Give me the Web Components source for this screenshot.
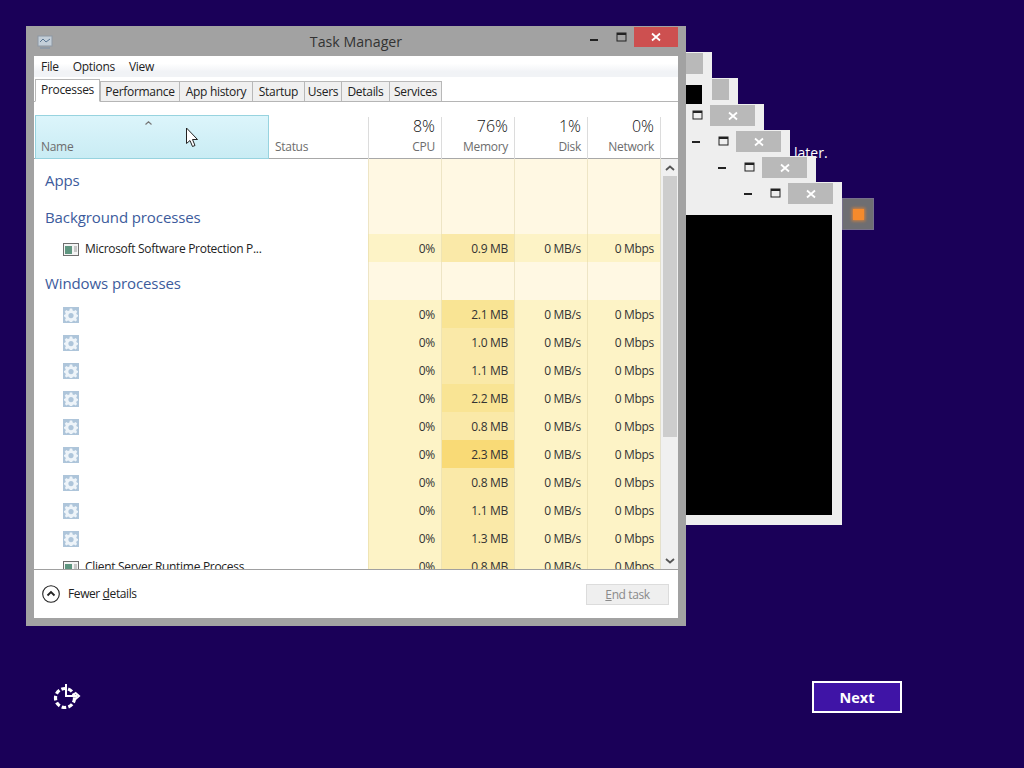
<!DOCTYPE html>
<html>
<head>
<meta charset="utf-8">
<title>Task Manager</title>
<style>
  html, body { margin: 0; height: 100%; background: #1a0058; overflow: hidden; }
  body { font-family: "Open Sans", "Liberation Sans", sans-serif; }
</style>
</head>
<body>
<setup-screen>
  <span slot="text">later.</span>
  <back-window x="312" y="52" style="z-index:2"></back-window>
  <back-window x="338" y="78" style="z-index:1"></back-window>
  <back-window x="364" y="104" style="z-index:3"></back-window>
  <back-window x="390" y="130" style="z-index:4"></back-window>
  <back-window x="416" y="156" style="z-index:5"></back-window>
  <back-window x="442" y="182" style="z-index:6"></back-window>
  <task-manager>
    <group-row h="39" pad="11">Apps</group-row>
    <group-row h="36" pad="9">Background processes</group-row>
    <proc-row icon="exe" mem="0.9 MB" heat="1">Microsoft Software Protection P...</proc-row>
    <group-row h="38" pad="11">Windows processes</group-row>
    <proc-row icon="gear" mem="2.1 MB" heat="2"></proc-row>
    <proc-row icon="gear" mem="1.0 MB" heat="1"></proc-row>
    <proc-row icon="gear" mem="1.1 MB" heat="1"></proc-row>
    <proc-row icon="gear" mem="2.2 MB" heat="2"></proc-row>
    <proc-row icon="gear" mem="0.8 MB" heat="1"></proc-row>
    <proc-row icon="gear" mem="2.3 MB" heat="3"></proc-row>
    <proc-row icon="gear" mem="0.8 MB" heat="1"></proc-row>
    <proc-row icon="gear" mem="1.1 MB" heat="1"></proc-row>
    <proc-row icon="gear" mem="1.3 MB" heat="1"></proc-row>
    <proc-row icon="exe" mem="0.8 MB" heat="1">Client Server Runtime Process</proc-row>
  </task-manager>
</setup-screen>

<script>
class Shadowed extends HTMLElement {
  constructor() {
    super()
    this.attachShadow({ mode: 'open' })
  }
}

const MIN_GLYPH = '<svg width="10" height="10" viewBox="0 0 10 10"><rect x="1" y="5" width="8" height="2" fill="#222"/></svg>'
const MAX_GLYPH = '<svg width="11" height="10" viewBox="0 0 11 10"><rect x="1" y="1" width="9" height="8" fill="none" stroke="#222" stroke-width="1"/><rect x="1" y="1" width="9" height="2" fill="#222"/></svg>'
const CLOSE_GLYPH = '<svg width="10" height="10" viewBox="0 0 10 10"><path d="M1 1.5L9 8.5M9 1.5L1 8.5" stroke="#fff" stroke-width="1.8"/></svg>'

class SetupScreen extends Shadowed {
  connectedCallback() {
    this.shadowRoot.innerHTML = `
      <style>
        :host { display: flex; flex-direction: column; justify-content: flex-end; position: relative; height: 768px; box-sizing: border-box; padding: 0 122px 55px 53px; color: #fff; overflow: hidden; }
        .later { position: absolute; left: 794px; top: 143px; font: 400 14px "Open Sans", sans-serif; }
        .tile { position: absolute; left: 842px; top: 198px; width: 32px; height: 32px; box-sizing: border-box; border: 1px solid #77708c; background: #6e6e72; display: flex; align-items: center; justify-content: center; z-index: 7; }
        .tile i { width: 11px; height: 11px; background: #f58a2c; box-shadow: 0 0 3px 1px #d8823a; }
        footer { display: flex; align-items: center; justify-content: space-between; }
        button { width: 90px; height: 32px; box-sizing: border-box; border: 2px solid #fff; background: #3f14a6; color: #fff; font: 700 14.5px "Open Sans", sans-serif; padding: 0; }
        svg { display: block; }
      </style>
      <div class="later"><slot name="text"></slot></div>
      <div class="tile"><i></i></div>
      <slot></slot>
      <footer>
        <svg width="28" height="28" viewBox="0 0 28 28" fill="none" stroke="#fff">
          <circle cx="12" cy="15" r="9.5" stroke-width="3.2" stroke-dasharray="4.6 2.2"/>
          <path d="M13 1V13H24" stroke-width="2"/>
          <path d="M22 9.5L26 13L22 16.5" stroke-width="2"/>
        </svg>
        <button>Next</button>
      </footer>`
  }
}

class BackWindow extends Shadowed {
  connectedCallback() {
    this.style.left = this.getAttribute('x') + 'px'
    this.style.top = this.getAttribute('y') + 'px'
    this.shadowRoot.innerHTML = `
      <style>
        :host { position: absolute; display: flex; flex-direction: column; width: 400px; height: 343px; box-sizing: border-box; background: #eeeeee; padding: 0 10px 10px 9px; }
        .bar { display: flex; justify-content: flex-end; height: 33px; flex: none; margin-right: -1px; }
        .b { width: 27px; height: 21px; display: flex; align-items: center; justify-content: center; }
        .b svg { margin-left: 1px; }
        .x { width: 45px; background: #b9b9b9; margin-top: 1px; }
        .x svg { margin: 0; }
        .body { flex: 1; background: #000; }
      </style>
      <div class="bar">
        <div class="b">${MIN_GLYPH}</div>
        <div class="b">${MAX_GLYPH}</div>
        <div class="b x">${CLOSE_GLYPH}</div>
      </div>
      <div class="body"></div>`
  }
}

class TaskManager extends Shadowed {
  connectedCallback() {
    var tabs = ['Processes', 'Performance', 'App history', 'Startup', 'Users', 'Details', 'Services']
    var widths = [65, 79, 73, 52, 37, 48, 52]
    var heads = [['8%', 'CPU'], ['76%', 'Memory'], ['1%', 'Disk'], ['0%', 'Network']]
    this.shadowRoot.innerHTML = `
      <style>
        :host { position: absolute; left: 26px; top: 26px; width: 660px; height: 600px; z-index: 10; display: flex; flex-direction: column; box-sizing: border-box; background: #a2a2a2; padding: 0 8px 8px; color: #222; font: 12px/16px "Open Sans", sans-serif; letter-spacing: -0.3px; }
        .title { display: flex; align-items: flex-start; height: 30px; flex: none; position: relative; }
        .title .app { margin: 9px 0 0 3px; opacity: .85; }
        .title .name { position: absolute; left: 0; right: 0; top: 6px; text-align: center; font-size: 14.2px; line-height: 20px; letter-spacing: 0; color: #333; }
        .title .btns { margin-left: auto; display: flex; }
        .title .b { width: 28px; height: 21px; display: flex; align-items: center; justify-content: center; }
        .title .b svg { margin-left: 3px; }
        .title .b:first-child svg { margin-top: 5px; }
        .title .x { width: 44px; background: #cd5050; height: 20px; margin-top: 1px; }
        .title .x svg { margin: 0; }
        .client { flex: 1; min-height: 0; display: flex; flex-direction: column; background: #fff; }
        .menu { display: flex; gap: 14px; height: 21px; flex: none; align-items: center; padding-left: 7px; background: linear-gradient(#fff 35%, #f1f3f6 75%); }
        .tabs { display: flex; height: 25px; flex: none; padding-left: 1px; border-bottom: 1px solid #b5b5b5; box-sizing: border-box; align-items: flex-end; }
        .tab { box-sizing: border-box; height: 20px; background: #f0f0f0; border: 1px solid #b8b8b8; border-bottom: 0; margin-left: -1px; text-align: center; line-height: 20px; }
        .tab:first-child { margin-left: 0; }
        .tab.on { height: 23px; background: #fff; margin-bottom: -1px; position: relative; z-index: 1; border-bottom: 1px solid #fff; }
        .tab:nth-child(2) { margin-left: 0; }
        .head { display: grid; grid-template-columns: 234px 99px repeat(3, 73px) 74px; height: 57px; flex: none; padding-left: 1px; border-bottom: 1px solid #a8a8a8; box-sizing: border-box; color: #6d6d6d; }
        .head > div { position: relative; display: flex; flex-direction: column; justify-content: flex-end; padding: 0 6px 4px; }
        .sort { margin-top: 13px; background: linear-gradient(#dcf5fb, #c9ecf4); border: 1px solid #97d3df; box-sizing: border-box; padding-bottom: 3px !important; padding-left: 5px !important; }
        .sort svg { position: absolute; left: 109px; top: 5px; }
        .st { padding-bottom: 4px; }
        .num { text-align: right; border-left: 1px solid #dcdcdc; margin-top: 15px; padding-bottom: 4px !important; }
        .num:last-child { border-right: 1px solid #dcdcdc; }
        .num b { position: relative; top: -2px; font-weight: 300; font-size: 16px; line-height: 22px; color: #111; letter-spacing: 0; }
        .list-wrap { flex: 1; min-height: 0; display: flex; }
        .list { width: 627px; flex: none; overflow: hidden; }
        .scroll { flex: 1; background: #f0f0f0; display: flex; flex-direction: column; align-items: center; padding-top: 6px; box-sizing: border-box; }
        .thumb { width: 14px; height: 261px; background: #cdcdcd; margin-top: 5px; }
        .down { margin-top: auto; margin-bottom: 5px; }
        .foot { height: 49px; flex: none; border-top: 1px solid #a0a0a0; display: flex; align-items: center; box-sizing: border-box; padding: 0 9px 0 8px; gap: 8px; letter-spacing: -0.4px; }
        .foot u { text-underline-offset: 1px; }
        .end { margin-left: auto; width: 83px; height: 21px; box-sizing: border-box; border: 1px solid #dcdcdc; background: #efefef; color: #8a8a8a; text-align: center; line-height: 19px; }
        .cursor { position: absolute; left: 159px; top: 101px; }
        svg { display: block; }
      </style>
      <div class="title">
        <svg class="app" width="16" height="14" viewBox="0 0 16 14">
          <rect x="1" y="1" width="14" height="10" fill="#c9d6e2" stroke="#8b98a6"/>
          <path d="M3 7L6 4L9 7L13 4" fill="none" stroke="#4f6f8f"/>
          <rect x="3" y="12" width="10" height="2" fill="#8b98a6"/>
        </svg>
        <div class="name">Task Manager</div>
        <div class="btns">
          <div class="b">${MIN_GLYPH}</div>
          <div class="b">${MAX_GLYPH}</div>
          <div class="b x">${CLOSE_GLYPH}</div>
        </div>
      </div>
      <div class="client">
        <div class="menu"><span>File</span><span>Options</span><span>View</span></div>
        <div class="tabs">${tabs.map((t, i) => `<div class="tab ${i ? '' : 'on'}" style="width:${widths[i] + (i ? 1 : 0)}px">${t}</div>`).join('')}</div>
        <div class="head">
          <div class="sort">
            <svg width="7" height="4" viewBox="0 0 7 4"><path d="M0.5 3.5L3.5 0.8L6.5 3.5" fill="none" stroke="#777" stroke-width="1.2"/></svg>
            Name
          </div>
          <div class="st">Status</div>
          ${heads.map(h => `<div class="num"><b>${h[0]}</b>${h[1]}</div>`).join('')}
        </div>
        <div class="list-wrap">
          <div class="list"><slot></slot></div>
          <div class="scroll">
            <svg width="10" height="6" viewBox="0 0 10 6"><path d="M1 5L5 1.5L9 5" fill="none" stroke="#555" stroke-width="1.8"/></svg>
            <div class="thumb"></div>
            <svg class="down" width="10" height="6" viewBox="0 0 10 6"><path d="M1 1L5 4.5L9 1" fill="none" stroke="#555" stroke-width="1.8"/></svg>
          </div>
        </div>
        <div class="foot">
          <svg width="18" height="18" viewBox="0 0 18 18"><circle cx="9" cy="9" r="8.3" fill="#fff" stroke="#222" stroke-width="1.1"/><path d="M5.5 10.5L9 7L12.5 10.5" fill="none" stroke="#222" stroke-width="1.8"/></svg>
          <span>Fewer <u>d</u>etails</span>
          <div class="end"><u>E</u>nd task</div>
        </div>
      </div>
      <svg class="cursor" width="15" height="21" viewBox="0 0 15 21"><path d="M1.5 1V16.5L5 13.5L7.5 19.5L10 18.5L7.5 12.5H12.5Z" fill="#fff" stroke="#222" stroke-width="1"/></svg>`
  }
}

class GroupRow extends Shadowed {
  connectedCallback() {
    this.shadowRoot.innerHTML = `
      <style>
        :host { display: grid; grid-template-columns: 334px repeat(3, 73px) 74px; height: ${this.getAttribute('h')}px; box-sizing: border-box; }
        .t { font-size: 15px; letter-spacing: -0.1px; color: #3c5b9c; padding: ${this.getAttribute('pad')}px 0 0 11px; line-height: 20px; white-space: nowrap; }
        .c { background: #fff8e3; border-left: 1px solid #eee5c5; box-sizing: border-box; }
        .c:last-child { border-right: 1px solid #e4e0cc; }
        .c:nth-child(2) { border-left: 0; }
      </style>
      <div class="t"><slot></slot></div>
      <div class="c"></div><div class="c"></div><div class="c"></div><div class="c"></div>`
  }
}

class ProcRow extends Shadowed {
  connectedCallback() {
    var heat = { 1: '#fae9a8', 2: '#f9e494', 3: '#f9da76' }[this.getAttribute('heat')]
    var icon = this.getAttribute('icon') === 'gear'
      ? `<svg width="16" height="16" viewBox="0 0 16 16"><rect width="16" height="16" fill="#aec5da"/><path d="M6.8 1.6H9.2L9.6 3.4L11 4L12.7 3L14.3 4.7L13.2 6.2L13.8 7.5L15 8V9.6L13.8 10.1L13.2 11.4L14.1 13L12.6 14.4L11 13.5L9.6 14.1L9.2 15H6.8L6.4 14.1L5 13.5L3.4 14.4L1.9 13L2.8 11.4L2.2 10.1L1 9.6V8L2.2 7.5L2.8 6.2L1.7 4.7L3.3 3L5 4L6.4 3.4Z" fill="#eef4f9"/><circle cx="8" cy="8.6" r="2.6" fill="#aec5da"/></svg>`
      : `<svg width="16" height="13" viewBox="0 0 16 13"><rect x="0.5" y="0.5" width="15" height="12" fill="#f4f4f4" stroke="#6f6f6f"/><rect x="2" y="3" width="7" height="8" fill="#5f9680"/><path d="M11 4H14M11 6H14M11 8H14" stroke="#999"/></svg>`
    this.shadowRoot.innerHTML = `
      <style>
        :host { display: grid; grid-template-columns: 334px repeat(3, 73px) 74px; height: 28px; box-sizing: border-box; line-height: 30px; }
        .n { display: flex; align-items: center; gap: 6px; padding: 0 0 0 29px; white-space: nowrap; color: #222; line-height: 16px; }
        .c { background: #fdf3c6; border-left: 1px solid #efe4b4; box-sizing: border-box; text-align: right; padding-right: 6px; color: #333; }
        .c:last-child { border-right: 1px solid #e4e0cc; padding-right: 6px; }
        .c:nth-child(2) { border-left: 0; }
        .m { background: ${heat}; }
      </style>
      <div class="n">${icon}<slot></slot></div>
      <div class="c">0%</div>
      <div class="c m">${this.getAttribute('mem')}</div>
      <div class="c">0 MB/s</div>
      <div class="c">0 Mbps</div>`
  }
}

customElements.define('setup-screen', SetupScreen)
customElements.define('back-window', BackWindow)
customElements.define('task-manager', TaskManager)
customElements.define('group-row', GroupRow)
customElements.define('proc-row', ProcRow)
</script>
</body>
</html>
